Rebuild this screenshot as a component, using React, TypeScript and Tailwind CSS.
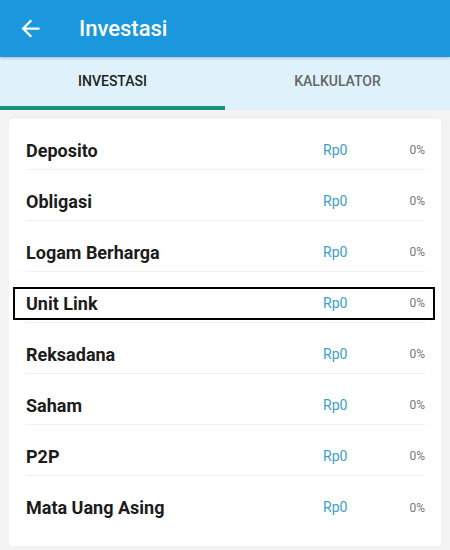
import React from "react";

const items = [
  "Deposito",
  "Obligasi",
  "Logam Berharga",
  "Unit Link",
  "Reksadana",
  "Saham",
  "P2P",
  "Mata Uang Asing",
];

function BackArrow() {
  return (
    <svg width="27" height="27" viewBox="0 0 24 24" fill="white">
      <path d="M20 11H7.83l5.59-5.59L12 4l-8 8 8 8 1.41-1.41L7.83 13H20v-2z" />
    </svg>
  );
}

export default function App() {
  return (
    <div
      className="w-[450px] h-[550px] overflow-hidden bg-[#f3f3f3] flex flex-col"
      style={{ fontFamily: "Roboto, 'Liberation Sans', sans-serif" }}
    >
      {/* App bar */}
      <div className="relative z-10 h-[57px] shrink-0 bg-[#1a97dd] flex items-center pl-[17px] shadow-[0_1px_3px_rgba(0,0,0,0.25)]">
        <BackArrow />
        <span className="ml-[35px] text-white text-[22px] font-medium">Investasi</span>
      </div>

      {/* Tabs */}
      <div className="h-[53px] shrink-0 bg-[#dff2fb] flex">
        <div className="flex-1 flex flex-col">
          <div className="flex-1 flex items-center justify-center text-[14px] font-medium text-[#222]">
            INVESTASI
          </div>
          <div className="h-[4px] bg-[#17927f]" />
        </div>
        <div className="flex-1 flex items-center justify-center pb-[4px] text-[14px] font-medium text-[#666]">
          KALKULATOR
        </div>
      </div>

      {/* Card */}
      <div className="pt-[9px] px-[9px]">
        <div className="bg-white rounded-[4px] pl-[17px] pr-[16px] pb-[19px]">
          {items.map((name, i) => (
            <div
              key={name}
              className={`relative h-[51px] pt-[12px] flex items-center ${
                i < items.length - 1 ? "border-b border-[#f0f0f0]" : ""
              }`}
            >
              <span className="flex-1 text-[18px] font-bold text-[#1c1c1c]">{name}</span>
              <span className="w-[70px] text-[14px] text-[#3b9fca]">Rp0</span>
              <span className="w-[32px] text-right text-[12px] text-[#777]">0%</span>
              {name === "Unit Link" && (
                <div className="absolute -left-[13px] -right-[10px] top-[15px] h-[33px] border-2 border-black" />
              )}
            </div>
          ))}
        </div>
      </div>
    </div>
  );
}
